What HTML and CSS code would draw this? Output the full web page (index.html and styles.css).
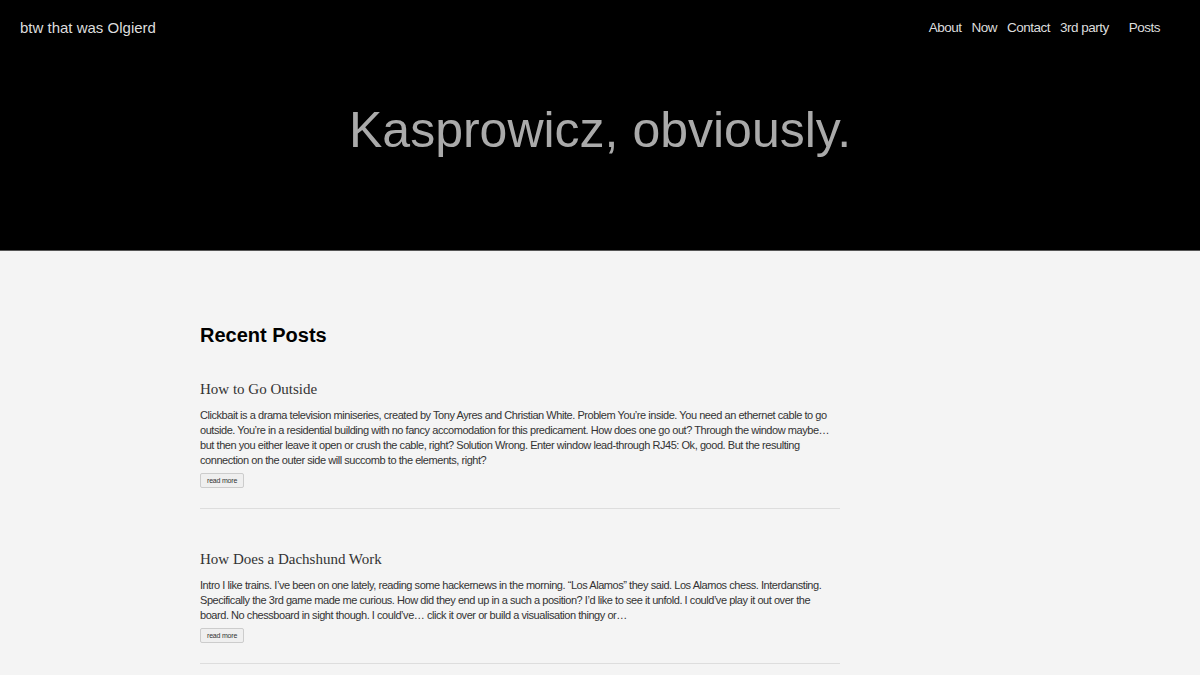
FILE: index.html
```html
<!DOCTYPE html>
<html lang="en">
<head>
<meta charset="utf-8">
<title>btw that was Olgierd</title>
<link rel="stylesheet" href="styles.css">
</head>
<body>
<header class="masthead">
  <div class="topbar">
    <a class="site-title" href="#">btw that was Olgierd</a>
    <nav class="nav">
      <a href="#">About</a>
      <a href="#">Now</a>
      <a href="#">Contact</a>
      <a href="#">3rd party</a>
      <a class="nav-posts" href="#">Posts</a>
    </nav>
  </div>
  <div class="hero">
    <h1 class="hero-title">Kasprowicz, obviously.</h1>
  </div>
</header>
<main class="main">
  <section class="posts">
    <h2 class="section-title">Recent Posts</h2>
    <article class="post">
      <h3 class="post-title">How to Go Outside</h3>
      <p class="post-excerpt">Clickbait is a drama television miniseries, created by Tony Ayres and Christian White. Problem You’re inside. You need an ethernet cable to go outside. You’re in a residential building with no fancy accomodation for this predicament. How does one go out? Through the window maybe… but then you either leave it open or crush the cable, right? Solution Wrong. Enter window lead-through RJ45: Ok, good. But the resulting connection on the outer side will succomb to the elements, right?</p>
      <a class="read-more" href="#">read more</a>
    </article>
    <article class="post">
      <h3 class="post-title">How Does a Dachshund Work</h3>
      <p class="post-excerpt">Intro I like trains. I’ve been on one lately, reading some hackernews in the morning. “Los Alamos” they said. Los Alamos chess. Interdansting. Specifically the 3rd game made me curious. How did they end up in a such a position? I’d like to see it unfold. I could’ve play it out over the board. No chessboard in sight though. I could’ve… click it over or build a visualisation thingy or…</p>
      <a class="read-more" href="#">read more</a>
    </article>
  </section>
</main>
</body>
</html>
```
FILE: styles.css
```css
html, body {
  margin: 0;
  padding: 0;
}
body {
  background: #f4f4f4;
  font-family: "Liberation Sans", Arial, sans-serif;
  color: #333;
}
a {
  text-decoration: none;
  color: inherit;
}
.masthead {
  background: #000;
  height: 251px;
  border-bottom: 1px solid #555;
  box-sizing: border-box;
}
.topbar {
  display: flex;
  align-items: center;
  justify-content: space-between;
  height: 54px;
  padding: 0 40px 0 20px;
}
.site-title {
  color: #ddd;
  font-size: 15px;
}
.nav {
  display: flex;
  gap: 10px;
  font-size: 13.5px;
  letter-spacing: -0.5px;
}
.nav a {
  color: #ddd;
}
.nav .nav-posts {
  margin-left: 10px;
}
.hero {
  display: flex;
  justify-content: center;
  padding-top: 45px;
}
.hero-title {
  margin: 0;
  font-weight: normal;
  font-size: 50px;
  line-height: 62px;
  color: #aaa;
}
.main {
  padding: 73px 0 40px 200px;
}
.posts {
  width: 640px;
}
.section-title {
  margin: 0 0 34px;
  font-size: 20px;
  line-height: 23px;
  color: #000;
}
.post {
  display: flex;
  flex-direction: column;
  align-items: flex-start;
  padding-bottom: 20px;
  border-bottom: 1px solid #ddd;
  margin-bottom: 42px;
}
.post-title {
  margin: 0 0 10px;
  font-family: "Liberation Serif", "Times New Roman", serif;
  font-weight: normal;
  font-size: 15px;
  line-height: 17px;
  color: #333;
}
.post-excerpt {
  margin: 0 0 5px;
  font-size: 11px;
  letter-spacing: -0.45px;
  line-height: 15px;
  color: #333;
}
.read-more {
  display: block;
  font-size: 7px;
  letter-spacing: -0.2px;
  line-height: 11px;
  padding: 1px 6px;
  color: #333;
  background: #efefef;
  border: 1px solid #ccc;
  border-radius: 2px;
}
```
